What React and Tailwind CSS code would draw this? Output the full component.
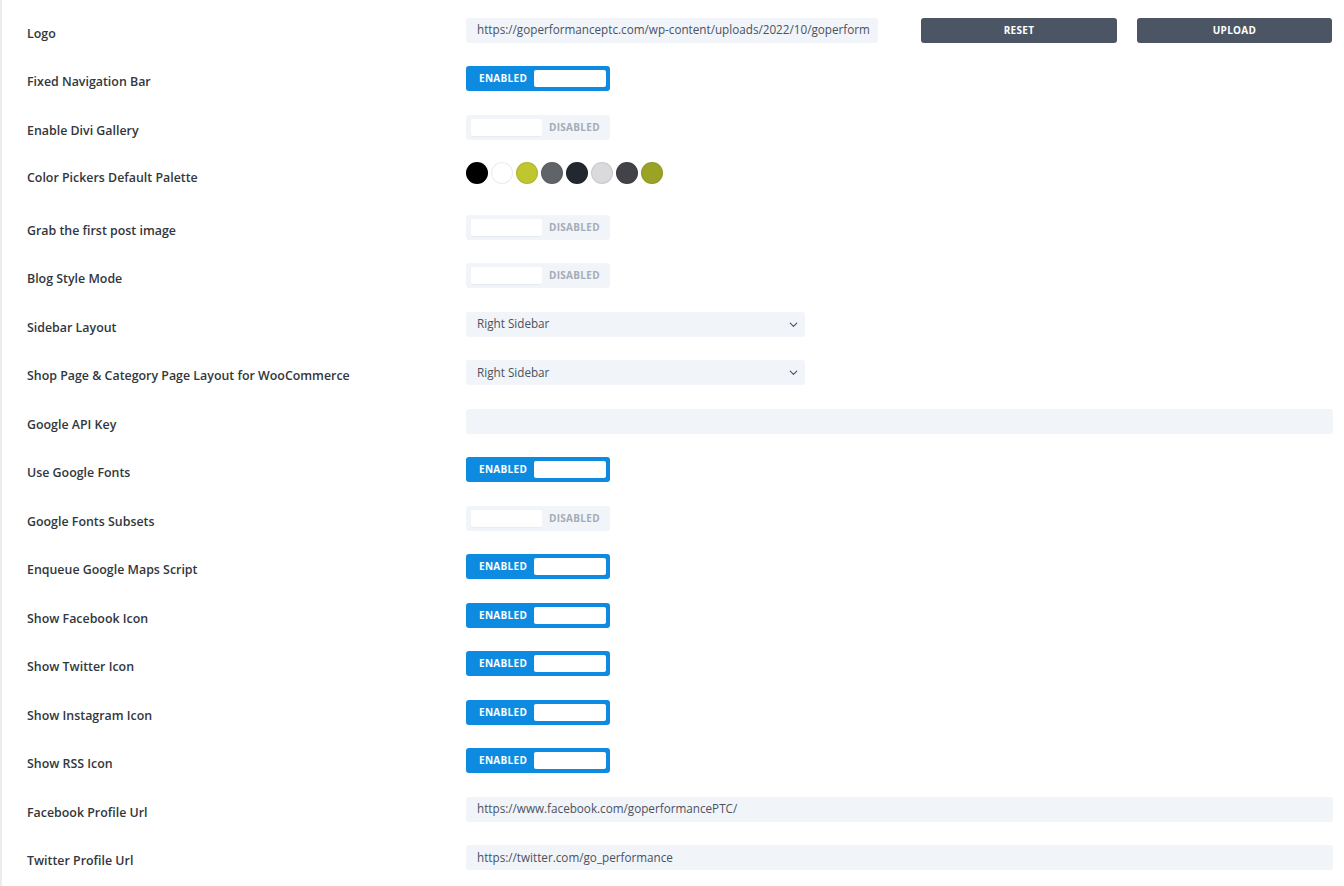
const rows = [
  { label: "Logo", type: "upload", value: "https://goperformanceptc.com/wp-content/uploads/2022/10/goperform" },
  { label: "Fixed Navigation Bar", type: "toggle", on: true },
  { label: "Enable Divi Gallery", type: "toggle", on: false },
  { label: "Color Pickers Default Palette", type: "palette" },
  { label: "Grab the first post image", type: "toggle", on: false },
  { label: "Blog Style Mode", type: "toggle", on: false },
  { label: "Sidebar Layout", type: "select", value: "Right Sidebar" },
  { label: "Shop Page & Category Page Layout for WooCommerce", type: "select", value: "Right Sidebar" },
  { label: "Google API Key", type: "text", value: "" },
  { label: "Use Google Fonts", type: "toggle", on: true },
  { label: "Google Fonts Subsets", type: "toggle", on: false },
  { label: "Enqueue Google Maps Script", type: "toggle", on: true },
  { label: "Show Facebook Icon", type: "toggle", on: true },
  { label: "Show Twitter Icon", type: "toggle", on: true },
  { label: "Show Instagram Icon", type: "toggle", on: true },
  { label: "Show RSS Icon", type: "toggle", on: true },
  { label: "Facebook Profile Url", type: "text", value: "https://www.facebook.com/goperformancePTC/" },
  { label: "Twitter Profile Url", type: "text", value: "https://twitter.com/go_performance" },
];

const palette = ["#000000", "#ffffff", "#bfc62f", "#606367", "#23272f", "#dadadd", "#414349", "#9aa325"];

const Toggle = ({ on }) =>
  on ? (
    <div className="flex h-[25px] w-[144px] items-center justify-between rounded-[3px] bg-[#0c8be0] pl-[13px] pr-[4px]">
      <span className="text-[10px] font-bold tracking-[0.3px] text-white">ENABLED</span>
      <span className="h-[17px] w-[72px] rounded-[2px] bg-white" />
    </div>
  ) : (
    <div className="flex h-[25px] w-[144px] items-center rounded-[3px] bg-[#f1f4f8] pl-[5px]">
      <span className="h-[17px] w-[71px] rounded-[2px] bg-white shadow-[0_1px_1px_rgba(0,0,0,0.04)]" />
      <span className="ml-[7px] text-[10px] font-bold tracking-[0.3px] text-[#a4acb7]">DISABLED</span>
    </div>
  );

const Field = ({ value, className }) => (
  <div className={`flex h-[25px] items-center overflow-hidden whitespace-nowrap rounded-[3px] bg-[#f1f4f8] px-[11px] text-[11.7px] font-normal text-[#4a5260] ${className}`}>
    {value}
  </div>
);

const Control = ({ row }) => {
  if (row.type === "toggle") return <Toggle on={row.on} />;
  if (row.type === "upload")
    return (
      <div className="flex items-center">
        <Field value={row.value} className="w-[412px]" />
        <button className="ml-[43px] h-[25px] w-[196px] rounded-[3px] bg-[#4b5563] text-[10px] font-bold tracking-[0.3px] text-white">
          RESET
        </button>
        <button className="ml-[20px] h-[25px] w-[195px] rounded-[3px] bg-[#4b5563] text-[10px] font-bold tracking-[0.3px] text-white">
          UPLOAD
        </button>
      </div>
    );
  if (row.type === "select")
    return (
      <div className="flex h-[25px] w-[339px] items-center justify-between rounded-[3px] bg-[#f1f4f8] pl-[11px] pr-[6px] text-[11.7px] font-normal text-[#4a5260]">
        <span>{row.value}</span>
        <svg width="11" height="11" viewBox="0 0 24 24" fill="none" stroke="#4c5866" strokeWidth="2.6" strokeLinecap="round" strokeLinejoin="round">
          <path d="M5 9l7 7 7-7" />
        </svg>
      </div>
    );
  if (row.type === "palette")
    return (
      <div className="mb-[8px] flex items-center gap-[3px]">
        {palette.map((c, i) => (
          <span
            key={i}
            className="h-[22px] w-[22px] rounded-full shadow-[inset_0_0_0_1px_rgba(0,0,0,0.08)]"
            style={{ backgroundColor: c }}
          />
        ))}
      </div>
    );
  return <Field value={row.value} className="w-full" />;
};

export default function App() {
  return (
    <div
      className="min-h-[886px] border-l-2 border-[#ececec] bg-white pt-[6px]"
      style={{ fontFamily: '"Open Sans", "Noto Sans", sans-serif' }}
    >
      {rows.map((row) => (
        <div
          key={row.label}
          className={`flex items-center ${row.type === "palette" ? "h-[51.5px]" : "h-[48.5px]"}`}
        >
          <div
            className={`w-[464px] shrink-0 pl-[25px] text-[12.4px] font-semibold text-[#32373c] ${row.type === "palette" ? "mt-[3px]" : "mt-[8px]"}`}
          >
            {row.label}
          </div>
          <div className="min-w-0 flex-1 pr-[11px]">
            <Control row={row} />
          </div>
        </div>
      ))}
    </div>
  );
}
